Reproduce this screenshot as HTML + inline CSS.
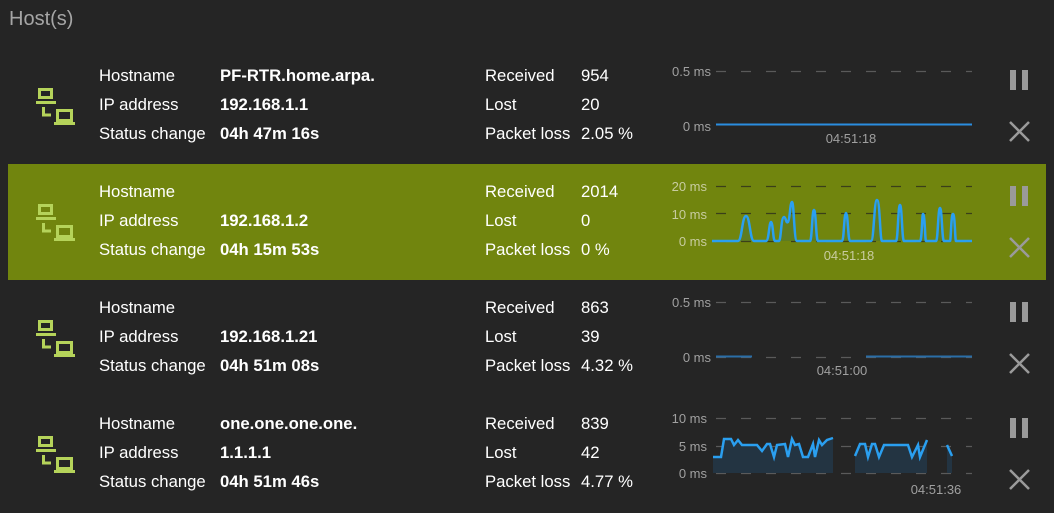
<!DOCTYPE html>
<html><head><meta charset="utf-8"><style>
body{margin:0;width:1054px;height:513px;background:#252525;overflow:hidden;font-family:"Segoe UI","Liberation Sans",sans-serif;color:#fff;position:relative}
.t{position:absolute;font-size:16.7px;line-height:20px;white-space:nowrap;margin-top:1px}
.b{font-weight:bold}
.row{position:absolute;left:8px;width:1038px;height:116px}
.hl{background:#71850e}
h1{position:absolute;left:9px;top:8px;margin:0;font-weight:normal;font-size:20px;color:#a5a5a5}
</style></head><body>
<h1>Host(s)</h1>
<div class="row hl" style="top:164px"></div>
<svg width="1054" height="513" style="position:absolute;left:0;top:0" font-family="Liberation Sans, sans-serif" font-size="13">
<defs>
<g id="ic" fill="none" stroke="#b5d35a" stroke-width="3">
<rect x="39.5" y="89.5" width="12" height="8"/><line x1="36" y1="102.5" x2="56" y2="102.5"/>
<polyline points="43.5,107 43.5,115 51,115"/>
<rect x="57.5" y="110.5" width="14" height="10"/><line x1="54" y1="123.5" x2="75" y2="123.5"/>
</g>
<g id="ctl" fill="#9a9a9a"><rect x="1010" y="70" width="6" height="20"/><rect x="1022" y="70" width="6" height="20"/>
<path d="M1010 122 L1029 141 M1029 122 L1010 141" stroke="#9a9a9a" stroke-width="2.5"/></g>
</defs>
<use href="#ic"/><use href="#ic" y="116"/><use href="#ic" y="232"/><use href="#ic" y="348"/>
<use href="#ctl"/><use href="#ctl" y="116"/><use href="#ctl" y="232"/><use href="#ctl" y="348"/>
<g stroke="#5a5a5a" stroke-dasharray="10 15" stroke-width="1.2">
<line x1="716" y1="71.5" x2="972" y2="71.5"/>
<line x1="716" y1="186.5" x2="972" y2="186.5" stroke="#3a3f1a"/><line x1="716" y1="213.5" x2="972" y2="213.5" stroke="#3a3f1a"/><line x1="716" y1="241.5" x2="972" y2="241.5" stroke="#3a3f1a"/>
<line x1="716" y1="302.5" x2="972" y2="302.5"/><line x1="716" y1="357.5" x2="972" y2="357.5"/>
<line x1="716" y1="418.5" x2="972" y2="418.5"/><line x1="716" y1="446.5" x2="972" y2="446.5"/><line x1="716" y1="473.5" x2="972" y2="473.5"/>
</g>
<g fill="#a0a0a0" text-anchor="end">
<text x="711" y="76">0.5 ms</text><text x="711" y="131">0 ms</text>
<text x="707" y="191" fill="#c8cca0">20 ms</text><text x="707" y="219" fill="#c8cca0">10 ms</text><text x="707" y="246" fill="#c8cca0">0 ms</text>
<text x="711" y="307">0.5 ms</text><text x="711" y="362">0 ms</text>
<text x="707" y="423">10 ms</text><text x="707" y="451">5 ms</text><text x="707" y="478">0 ms</text>
</g>
<g fill="#a0a0a0" text-anchor="middle">
<text x="851" y="143">04:51:18</text><text x="849" y="260" fill="#c8cca0">04:51:18</text><text x="842" y="375">04:51:00</text><text x="936" y="494">04:51:36</text>
</g>
<line x1="716" y1="124.5" x2="972" y2="124.5" stroke="#2a8de0" stroke-width="2"/>
<path d="M716 356.5H752M866 356.5H972" stroke="#2a6ea8" stroke-width="2"/>
<path d="M712 241 H738 C742 241 742 216 746 216 C750 216 750 241 754 241 H766 C769 241 769 222 771 222 C773 222 773 241 775 241 H779 C781 241 781 217 784 217 C786 217 786 224 788 222 C790 220 790 202 792 202 C794 202 794 241 797 241 H810 C812 241 812 210 814 210 C816 210 816 241 818 241 H842 C844 241 844 213 846 213 C848 213 848 241 850 241 H871 C874 241 874 200 877 200 C880 200 880 241 882 241 H896 C898 241 898 205 900 205 C902 205 902 241 904 241 H920 C922 241 922 214 923 214 C925 214 925 241 926 241 H936 C938 241 938 208 940 208 C942 208 942 241 944 241 H950 C951 241 951 214 953 214 C955 214 955 241 956 241 H972" fill="rgba(70,110,60,0.4)" stroke="#2a9ff0" stroke-width="2.5"/>
<path d="M713 457L721 457L724 439L731 439L734 445L738 440L742 445L757 445L762 451L767 444L770 444L774 457L777 445L785 444L788 457L792 439L795 445L799 444L803 457L808 457L813 444L815 457L819 440L822 445L827 440L833 440V473H713Z" fill="#233442"/>
<path d="M855 456L860 444L865 444L868 457L872 444L875 444L879 457L884 445L908 445L912 457L918 445L920 457L927 440V473H855Z" fill="#233442"/>
<path d="M947 445L952 456V473H947Z" fill="#233442"/>
<g fill="none" stroke="#2a9ff0" stroke-width="2.5">
<path d="M713 457L721 457L724 439L731 439L734 445L738 440L742 445L757 445L762 451L767 444L770 444L774 457L777 445L785 444L788 457L792 439L795 445L799 444L803 457L808 457L813 444L815 457L819 440L822 445L827 440L833 438"/>
<path d="M855 456L860 444L865 444L868 457L872 444L875 444L879 457L884 445L908 445L912 457L918 445L920 457L927 440"/>
<path d="M947 445L952 456"/>
</g>
</svg>
<div class="t" style="left:99px;top:65px">Hostname</div><div class="t b" style="left:220px;top:65px">PF-RTR.home.arpa.</div>
<div class="t" style="left:99px;top:94px">IP address</div><div class="t b" style="left:220px;top:94px">192.168.1.1</div>
<div class="t" style="left:99px;top:123px">Status change</div><div class="t b" style="left:220px;top:123px">04h 47m 16s</div>
<div class="t" style="left:485px;top:65px">Received</div><div class="t" style="left:581px;top:65px">954</div>
<div class="t" style="left:485px;top:94px">Lost</div><div class="t" style="left:581px;top:94px">20</div>
<div class="t" style="left:485px;top:123px">Packet loss</div><div class="t" style="left:581px;top:123px">2.05 %</div>

<div class="t" style="left:99px;top:181px">Hostname</div>
<div class="t" style="left:99px;top:210px">IP address</div><div class="t b" style="left:220px;top:210px">192.168.1.2</div>
<div class="t" style="left:99px;top:239px">Status change</div><div class="t b" style="left:220px;top:239px">04h 15m 53s</div>
<div class="t" style="left:485px;top:181px">Received</div><div class="t" style="left:581px;top:181px">2014</div>
<div class="t" style="left:485px;top:210px">Lost</div><div class="t" style="left:581px;top:210px">0</div>
<div class="t" style="left:485px;top:239px">Packet loss</div><div class="t" style="left:581px;top:239px">0 %</div>

<div class="t" style="left:99px;top:297px">Hostname</div>
<div class="t" style="left:99px;top:326px">IP address</div><div class="t b" style="left:220px;top:326px">192.168.1.21</div>
<div class="t" style="left:99px;top:355px">Status change</div><div class="t b" style="left:220px;top:355px">04h 51m 08s</div>
<div class="t" style="left:485px;top:297px">Received</div><div class="t" style="left:581px;top:297px">863</div>
<div class="t" style="left:485px;top:326px">Lost</div><div class="t" style="left:581px;top:326px">39</div>
<div class="t" style="left:485px;top:355px">Packet loss</div><div class="t" style="left:581px;top:355px">4.32 %</div>

<div class="t" style="left:99px;top:413px">Hostname</div><div class="t b" style="left:220px;top:413px">one.one.one.one.</div>
<div class="t" style="left:99px;top:442px">IP address</div><div class="t b" style="left:220px;top:442px">1.1.1.1</div>
<div class="t" style="left:99px;top:471px">Status change</div><div class="t b" style="left:220px;top:471px">04h 51m 46s</div>
<div class="t" style="left:485px;top:413px">Received</div><div class="t" style="left:581px;top:413px">839</div>
<div class="t" style="left:485px;top:442px">Lost</div><div class="t" style="left:581px;top:442px">42</div>
<div class="t" style="left:485px;top:471px">Packet loss</div><div class="t" style="left:581px;top:471px">4.77 %</div>
</body></html>
